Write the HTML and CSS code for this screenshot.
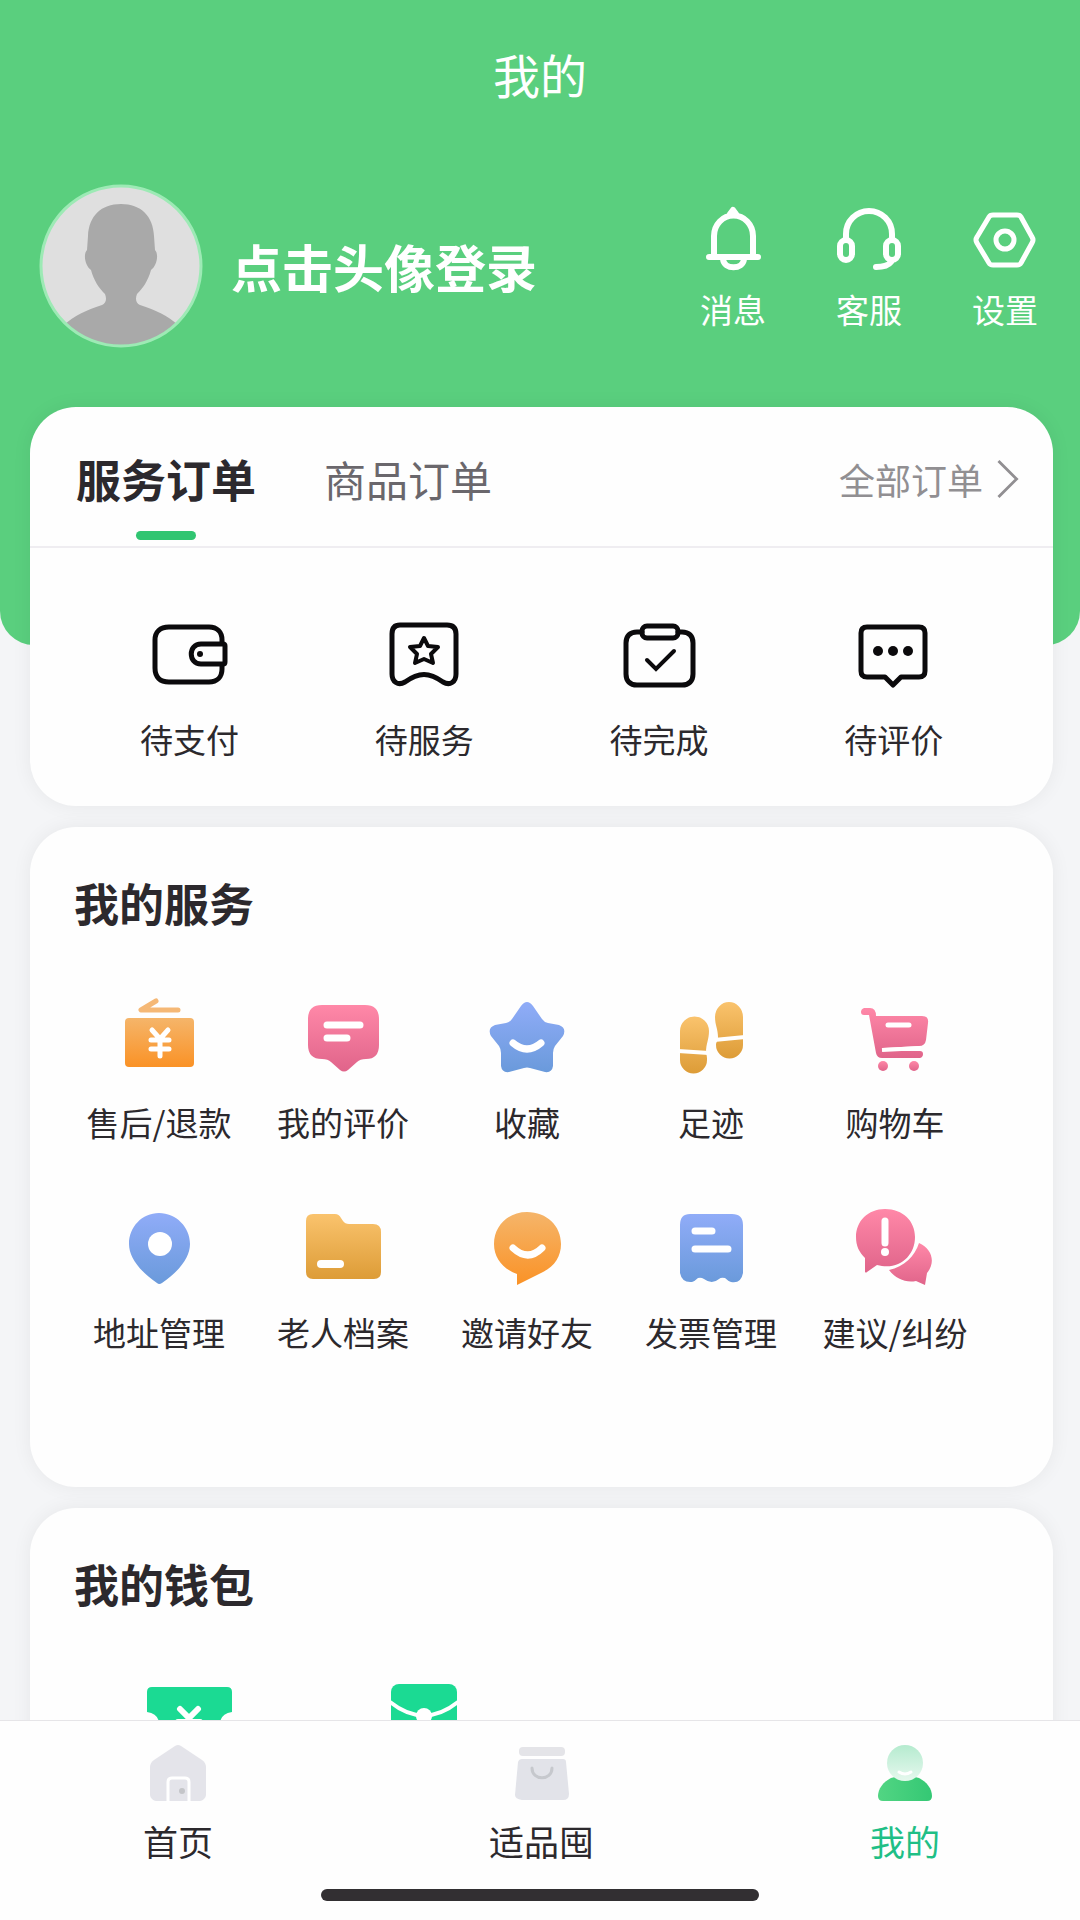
FILE: index.html
```html
<!DOCTYPE html>
<html lang="zh-CN">
<head>
    <meta charset="UTF-8">
    <meta name="viewport" content="width=device-width, initial-scale=1.0">
    <title>我的</title>
    <link rel="stylesheet" href="styles.css">
</head>
<body>

    <!-- shared gradients -->
    <svg class="defs" width="0" height="0" aria-hidden="true">
        <defs>
            <linearGradient id="orange" x1="0" y1="0" x2="0" y2="1">
                <stop offset="0" stop-color="#f5b56a"/>
                <stop offset="1" stop-color="#fa9226"/>
            </linearGradient>
            <linearGradient id="amber" x1="0" y1="0" x2="0" y2="1">
                <stop offset="0" stop-color="#fac36d"/>
                <stop offset="1" stop-color="#dd9c37"/>
            </linearGradient>
            <linearGradient id="pink" x1="0" y1="0" x2="0" y2="1">
                <stop offset="0" stop-color="#ff88a8"/>
                <stop offset="1" stop-color="#e0648a"/>
            </linearGradient>
            <linearGradient id="blue" x1="0" y1="0" x2="0" y2="1">
                <stop offset="0" stop-color="#90acf8"/>
                <stop offset="1" stop-color="#6a9adb"/>
            </linearGradient>
            <linearGradient id="head" x1="0" y1="0" x2="0" y2="1">
                <stop offset="0" stop-color="#b5ebcf"/>
                <stop offset="1" stop-color="#e6f8ee"/>
            </linearGradient>
            <linearGradient id="torso" x1="0" y1="0" x2="1" y2="0">
                <stop offset="0" stop-color="#52d583"/>
                <stop offset="1" stop-color="#34c874"/>
            </linearGradient>
        </defs>
    </svg>

    <div class="page">
        <header class="header">
            <h1 class="title">我的</h1>
            <div class="profile">
                <button type="button" class="login">
                    <svg class="avatar" viewBox="0 0 164 164">
                        <clipPath id="round"><circle cx="82" cy="82" r="80"/></clipPath>
                        <circle cx="82" cy="82" r="80" fill="#dfdfdf"/>
                        <path clip-path="url(#round)" fill="#a9a9a9" d="M82 20c-20 0-32 12-33 32l-1 14c-4 4-2 16 4 20 3 11 8 18 14 24 2 5 1 9-3 11-16 5-28 11-38 20v30h114v-30c-10-9-22-15-38-20-4-2-5-6-3-11 6-6 11-13 14-24 6-4 8-16 4-20l-1-14c-1-20-13-32-33-32z"/>
                        <circle cx="82" cy="82" r="80" fill="none" stroke="#9deab5" stroke-width="3"/>
                    </svg>
                    <span>点击头像登录</span>
                </button>
                <div class="actions">
                    <button type="button" class="action">
                        <svg viewBox="0 0 72 72" fill="none" stroke="#fff" stroke-width="6" stroke-linecap="round" stroke-linejoin="round">
                            <path d="M17 56V36a19 20 0 0 1 39 0v20M12 57h49M26 59c1 11 20 11 21 0"/>
                            <path d="M33 14l3-4 3 4z"/>
                        </svg>
                        <span>消息</span>
                    </button>
                    <button type="button" class="action">
                        <svg viewBox="0 0 72 72" fill="none" stroke="#fff" stroke-width="6" stroke-linecap="round">
                            <path d="M13 39v-5a23 23 0 0 1 46 0v5M58 62c-3 4-8 5-15 5"/>
                            <rect x="7" y="40" width="12" height="20" rx="6"/>
                            <rect x="53" y="40" width="12" height="20" rx="6"/>
                        </svg>
                        <span>客服</span>
                    </button>
                    <button type="button" class="action">
                        <svg viewBox="0 0 72 72" fill="none" stroke="#fff" stroke-width="5" stroke-linejoin="round">
                            <path d="M24 15h24q3 0 4 2l11 20q2 3 0 6L52 63q-1 2-4 2H24q-3 0-4-2L8 43q-2-3 0-6l12-20q1-2 4-2z"/>
                            <circle cx="36" cy="40" r="9"/>
                        </svg>
                        <span>设置</span>
                    </button>
                </div>
            </div>
        </header>

        <main class="content">
            <section class="card">
                <div class="tabs">
                    <button type="button" class="tab active">服务订单</button>
                    <button type="button" class="tab">商品订单</button>
                    <a class="all-orders" href="#">
                        全部订单
                        <svg viewBox="0 0 24 42" fill="none" stroke="#918f92" stroke-width="3"><path d="M2 2l19 19L2 40"/></svg>
                    </a>
                </div>
                <div class="grid orders">
                    <a class="item" href="#">
                        <svg viewBox="0 0 80 80" fill="none" stroke="#0b0a0c" stroke-width="5">
                            <path d="M73 33v-3c0-8-5-13-13-13H20C11 17 6 22 6 30v28c0 9 5 14 14 14h40c8 0 13-5 13-13v-3"/>
                            <path d="M52 34h22q2 0 2 2v16q0 2-2 2H52c-13 0-13-20 0-20z"/>
                            <circle cx="51" cy="44" r="3" fill="#0b0a0c" stroke="none"/>
                        </svg>
                        <span>待支付</span>
                    </a>
                    <a class="item" href="#">
                        <svg viewBox="0 0 80 80" fill="none" stroke="#0b0a0c" stroke-width="5" stroke-linejoin="round">
                            <path d="M16 15h47c6 0 9 3 9 9v40c0 8-6 12-13 8-14-10-24-10-38 0-7 4-13 0-13-8V24c0-6 3-9 8-9z"/>
                            <path stroke-width="4" d="M40 28l4 8 10 1-7 7 2 9-9-4-9 4 2-9-7-7 10-1z"/>
                        </svg>
                        <span>待服务</span>
                    </a>
                    <a class="item" href="#">
                        <svg viewBox="0 0 80 80" fill="none" stroke="#0b0a0c" stroke-width="5" stroke-linecap="round">
                            <path d="M23 22h-5c-7 0-11 4-11 11v31c0 7 4 11 11 11h45c7 0 11-4 11-11V33c0-7-4-11-11-11h-4"/>
                            <rect x="23" y="16" width="36" height="12" rx="5"/>
                            <path stroke-width="4" d="M28 50l9 9 18-18"/>
                        </svg>
                        <span>待完成</span>
                    </a>
                    <a class="item" href="#">
                        <svg viewBox="0 0 80 80" fill="none" stroke="#0b0a0c" stroke-width="5" stroke-linejoin="round">
                            <path d="M13 17h52q6 0 6 6v38q0 6-6 6H47l-8 8-8-8H13q-6 0-6-6V23q0-6 6-6z"/>
                            <g fill="#0b0a0c" stroke="none">
                                <circle cx="24" cy="41" r="5"/><circle cx="39" cy="41" r="5"/><circle cx="54" cy="41" r="5"/>
                            </g>
                        </svg>
                        <span>待评价</span>
                    </a>
                </div>
            </section>

            <section class="card services-card">
                <h2 class="card-title">我的服务</h2>
                <div class="grid services">
                    <a class="item" href="#">
                        <svg viewBox="0 0 80 80">
                            <path d="M37 8L22 17h37" fill="none" stroke="#f5b876" stroke-width="5" stroke-linecap="round" stroke-linejoin="round"/>
                            <rect x="6" y="25" width="69" height="49" rx="4" fill="url(#orange)"/>
                            <path d="M33 37l8 9 8-9M41 46v17M32 47h18M32 56h18" fill="none" stroke="#fff" stroke-width="5" stroke-linecap="round"/>
                        </svg>
                        <span>售后/退款</span>
                    </a>
                    <a class="item" href="#">
                        <svg viewBox="0 0 80 80">
                            <path fill="url(#pink)" d="M19 12h43q14 0 14 14v26q0 14-13 14-6 0-9 3l-9 8q-4 3-8 0l-9-8q-3-3-9-3Q5 66 5 52V26q0-14 14-14z"/>
                            <path d="M24 32h33M24 45h20" stroke="#fff" stroke-width="7" stroke-linecap="round"/>
                        </svg>
                        <span>我的评价</span>
                    </a>
                    <a class="item" href="#">
                        <svg viewBox="0 0 80 80">
                            <path fill="url(#blue)" d="M34 13q6-8 12 0l9 13q2 3 6 4l11 2q8 3 4 11l-8 10q-2 3-2 7v13q-1 7-8 6l-15-4q-3-1-6 0l-15 4q-7 1-8-6V60q0-4-2-7L4 43q-4-8 4-11l11-2q4-1 6-4z"/>
                            <path d="M26 50q14 12 28 0" fill="none" stroke="#fff" stroke-width="7" stroke-linecap="round"/>
                        </svg>
                        <span>收藏</span>
                    </a>
                    <a class="item" href="#">
                        <svg viewBox="0 0 80 80" fill="url(#amber)">
                            <path d="M9 38a14 14 0 0 1 29 0c0 9-3 12-3 22 1 3 1 5 1 7a13 13 0 0 1-27 0z"/>
                            <path d="M44 24a14 15 0 0 1 28 0v28a13 13 0 0 1-27 0c0-3 2-4 2-8 0-8-3-12-3-20z"/>
                            <path d="M7 58l31 2M43 47l31-3" stroke="#fff" stroke-width="4"/>
                        </svg>
                        <span>足迹</span>
                    </a>
                    <a class="item" href="#">
                        <svg viewBox="0 0 80 80" fill="url(#pink)">
                            <path d="M9 15h6q6 0 6 8h46q7 0 6 7l-2 17q-1 6-7 6l-36 2q-2 2 0 3h37q3 0 3 3t-3 4H27q-5 0-6-5L14 22H9q-3 0-3-3t3-4z"/>
                            <circle cx="28" cy="73" r="5"/><circle cx="59" cy="73" r="5"/>
                            <path d="M33 32h21" stroke="#fff" stroke-width="5" stroke-linecap="round"/>
                            <path d="M27 57l39-2" stroke="#fff" stroke-width="4"/>
                        </svg>
                        <span>购物车</span>
                    </a>
                    <a class="item" href="#">
                        <svg viewBox="0 0 80 80">
                            <path fill="url(#blue)" d="M40 10c-17 0-30 14-30 31 0 12 9 26 28 39q2 2 5 0c19-13 28-27 28-39 0-17-14-31-31-31z"/>
                            <circle cx="41" cy="41" r="12" fill="#fff"/>
                        </svg>
                        <span>地址管理</span>
                    </a>
                    <a class="item" href="#">
                        <svg viewBox="0 0 80 80">
                            <path fill="url(#amber)" d="M10 11h22q4 0 6 4l2 3q2 3 6 3h24q8 0 8 8v40q0 7-7 7H10q-7 0-7-7V18q0-7 7-7z"/>
                            <path d="M18 61h19" stroke="#fff" stroke-width="8" stroke-linecap="round"/>
                        </svg>
                        <span>老人档案</span>
                    </a>
                    <a class="item" href="#">
                        <svg viewBox="0 0 80 80">
                            <path fill="url(#orange)" d="M40 9C21 9 7 23 7 41c0 14 9 25 23 30v11l26-13c12-6 18-16 18-28C74 23 60 9 40 9z"/>
                            <path d="M26 45q15 14 29 0" fill="none" stroke="#fff" stroke-width="7" stroke-linecap="round"/>
                        </svg>
                        <span>邀请好友</span>
                    </a>
                    <a class="item" href="#">
                        <svg viewBox="0 0 80 80">
                            <path fill="url(#blue)" d="M19 11h42q11 0 11 11v48q-2 11-12 9-3-1-6-4-4-1-6 1-7 6-15 0-3-2-6-1-3 3-6 4-10 1-12-9V22q0-11 10-11z"/>
                            <path d="M24 28h17M24 46h33" stroke="#fff" stroke-width="7" stroke-linecap="round"/>
                        </svg>
                        <span>发票管理</span>
                    </a>
                    <a class="item" href="#">
                        <svg viewBox="0 0 80 80" fill="url(#pink)">
                            <path d="M30 6C13 6 1 18 1 34c0 9 3 15 9 21v14q1 1 2 0l10-7c22 6 38-9 38-28C60 18 48 6 30 6z"/>
                            <path d="M64 40c13 6 17 19 8 30l-2 12-9-4c-10 2-20-2-27-11 15-3 26-14 30-27z"/>
                            <path d="M30 18v22" stroke="#fff" stroke-width="7" stroke-linecap="round"/>
                            <circle cx="30" cy="49" r="4" fill="#fff"/>
                        </svg>
                        <span>建议/纠纷</span>
                    </a>
                </div>
            </section>

            <section class="card">
                <h2 class="card-title">我的钱包</h2>
                <div class="grid wallet">
                    <a class="item" href="#" aria-label="优惠券">
                        <svg viewBox="0 0 90 90">
                            <path fill="#1bda93" d="M8 13h75q5 0 5 5v20q-12 2-12 12t12 12v12q0 5-5 5H8q-5 0-5-5V62q12-2 12-12T3 38V18q0-5 5-5z"/>
                            <path d="M36 35l9 9 9-9M45 44v22M34 48h22M34 57h22" fill="none" stroke="#fff" stroke-width="6" stroke-linecap="round"/>
                        </svg>
                    </a>
                    <a class="item" href="#" aria-label="红包">
                        <svg viewBox="0 0 90 90">
                            <rect x="12" y="10" width="66" height="72" rx="8" fill="#1bda93"/>
                            <path d="M11 28q34 27 68 0" fill="none" stroke="#fff" stroke-width="4"/>
                            <circle cx="45" cy="42" r="8" fill="#fff"/>
                        </svg>
                    </a>
                </div>
            </section>
        </main>
    </div>

    <nav class="tabbar">
        <div class="tabbar-items">
            <a class="tabbar-item" href="#">
                <svg viewBox="0 0 56 56">
                    <path fill="#e4e4ea" d="M25 1q3-2 6 0l21 14q4 3 4 7v28q0 2-2 4t-4 2H6q-2 0-4-2t-2-4V22q0-4 4-7z"/>
                    <path fill="none" stroke="#fff" stroke-width="3" d="M18 57V37q0-4 4-4h13q4 0 4 4v20"/>
                    <circle cx="32" cy="46" r="3" fill="#c4c5c9"/>
                </svg>
                <span>首页</span>
            </a>
            <a class="tabbar-item" href="#">
                <svg viewBox="0 0 56 56">
                    <rect x="5" y="2" width="46" height="9" rx="4" fill="#e4e4e8"/>
                    <path fill="#e2e3e9" d="M8 14h41q3 0 3 3l3 32q0 6-6 6H8q-7-1-7-5l3-33q1-3 4-3z"/>
                    <path fill="none" stroke="#c6c8cd" stroke-width="3" stroke-linecap="round" d="M18 23c0 13 20 13 20 0"/>
                </svg>
                <span>适品囤</span>
            </a>
            <a class="tabbar-item active" href="#">
                <svg viewBox="0 0 56 56">
                    <path fill="url(#torso)" d="M14 33q14-5 28 0c8 4 13 11 13 18q0 5-5 5H6q-5 0-5-5c0-7 5-14 13-18z"/>
                    <ellipse cx="28" cy="18" rx="18" ry="18" fill="url(#head)"/>
                    <path fill="none" stroke="#fff" stroke-width="3" stroke-linecap="round" d="M22 27q6 4 12 0"/>
                </svg>
                <span>我的</span>
            </a>
        </div>
        <div class="home-indicator"></div>
    </nav>

</body>
</html>
```
FILE: styles.css
```css
* {
    margin: 0;
    padding: 0;
    box-sizing: border-box;
}

body {
    display: flex;
    flex-direction: column;
    height: 100vh;
    background: #f4f5f7;
    color: #2c292d;
    font-family: "Noto Sans CJK SC", "Noto Sans", sans-serif;
    font-size: 33px;
    line-height: 48px;
}

button {
    background: none;
    border: none;
    color: inherit;
    font: inherit;
    cursor: pointer;
}

a {
    color: inherit;
    text-decoration: none;
}

svg {
    display: block;
    flex-shrink: 0;
    overflow: visible;
}

.defs {
    position: absolute;
}

.page {
    flex: 1;
    min-height: 0;
    overflow-y: auto;
    scrollbar-width: none;
}

/* header */
.header {
    padding: 44px 39px 297px;
    background: #5acf7e;
    border-radius: 0 0 34px 34px;
    color: #fff;
}

.title {
    font-size: 47px;
    font-weight: 400;
    line-height: 60px;
    text-align: center;
}

.profile {
    display: flex;
    align-items: center;
    justify-content: space-between;
    margin-top: 80px;
}

.login {
    display: flex;
    align-items: center;
    gap: 28px;
    font-size: 51px;
    font-weight: 700;
    line-height: 60px;
}

.avatar {
    width: 164px;
    height: 164px;
}

.actions {
    display: flex;
    gap: 64px;
}

.action {
    display: flex;
    flex-direction: column;
    align-items: center;
    gap: 13px;
    width: 72px;
}

.action svg {
    width: 72px;
    height: 72px;
}

/* cards */
.content {
    display: flex;
    flex-direction: column;
    gap: 21px;
    margin-top: -238px;
    padding: 0 27px 21px 30px;
}

.card {
    background: #fefefe;
    border-radius: 46px;
    box-shadow: 0 0 20px rgba(40, 20, 40, 0.06);
}

.card-title {
    padding: 46px 44px 0;
    font-size: 45px;
    font-weight: 700;
    line-height: 60px;
}

.tabs {
    display: flex;
    align-items: flex-start;
    gap: 68px;
    padding: 42px 33px 6px 46px;
    border-bottom: 2px solid #efedf1;
}

.tab {
    color: #6a676c;
    font-size: 42px;
    line-height: 60px;
}

.tab.active {
    color: #2c292d;
    font-size: 45px;
    font-weight: 700;
}

.tab::after {
    content: "";
    display: block;
    width: 60px;
    height: 9px;
    margin: 22px auto 0;
    border-radius: 5px;
}

.tab.active::after {
    background: #30c571;
}

.all-orders {
    display: flex;
    align-items: center;
    gap: 13px;
    margin-left: auto;
    color: #918f92;
    font-size: 36px;
    line-height: 60px;
}

.all-orders svg {
    width: 24px;
    height: 40px;
}

.grid {
    display: grid;
}

.item {
    display: flex;
    flex-direction: column;
    align-items: center;
    gap: 25px;
    white-space: nowrap;
}

.item svg {
    width: 80px;
    height: 80px;
}

.orders {
    grid-template-columns: repeat(4, 1fr);
    padding: 62px 42px 43px;
}

.services {
    grid-template-columns: repeat(5, 1fr);
    row-gap: 57px;
    padding: 60px 66px 131px 37px;
}

.wallet {
    grid-template-columns: repeat(4, 1fr);
    padding: 60px 42px;
}

.wallet svg {
    width: 90px;
    height: 90px;
}

/* bottom bar */
.tabbar {
    position: relative;
    padding: 24px 0 19px;
    background: #fefefe;
    border-top: 1px solid #e6e5e8;
}

.tabbar-items {
    display: flex;
    justify-content: space-between;
    padding: 0 118px 0 121px;
}

.tabbar-item {
    display: flex;
    flex-direction: column;
    align-items: center;
    gap: 16px;
    width: 114px;
    font-size: 35px;
}

.tabbar-item svg {
    width: 56px;
    height: 56px;
}

.tabbar-item.active {
    color: #1fbf86;
}

.home-indicator {
    width: 438px;
    max-width: 60%;
    height: 12px;
    margin: 24px auto 0;
    border-radius: 6px;
    background: #322f32;
}
```
